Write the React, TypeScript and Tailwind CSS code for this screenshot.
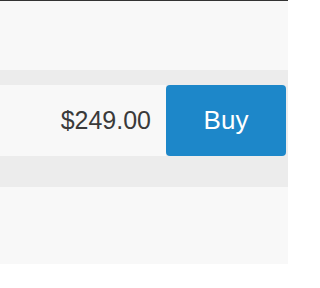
export default function App() {
  return (
    <main className="flex h-[288px] w-[288px] flex-col overflow-hidden bg-white font-['Liberation_Sans',Arial,sans-serif]">
      <div className="flex h-[264px] flex-col border-t border-[#333333] bg-[#f8f8f8] pt-[69px]">
        <section className="bg-[#ececec] pb-[31px] pr-[2px] pt-[15px]">
          <div className="flex h-[71px] items-stretch">
            <div className="flex flex-1 items-center justify-end bg-[#f8f8f8] pr-[15px] text-[25px] text-[#3a3a3a]">
              $249.00
            </div>
            <button className="w-[120px] rounded-[4px] bg-[#1d87c9] text-[26px] text-white">
              Buy
            </button>
          </div>
        </section>
      </div>
    </main>
  );
}
